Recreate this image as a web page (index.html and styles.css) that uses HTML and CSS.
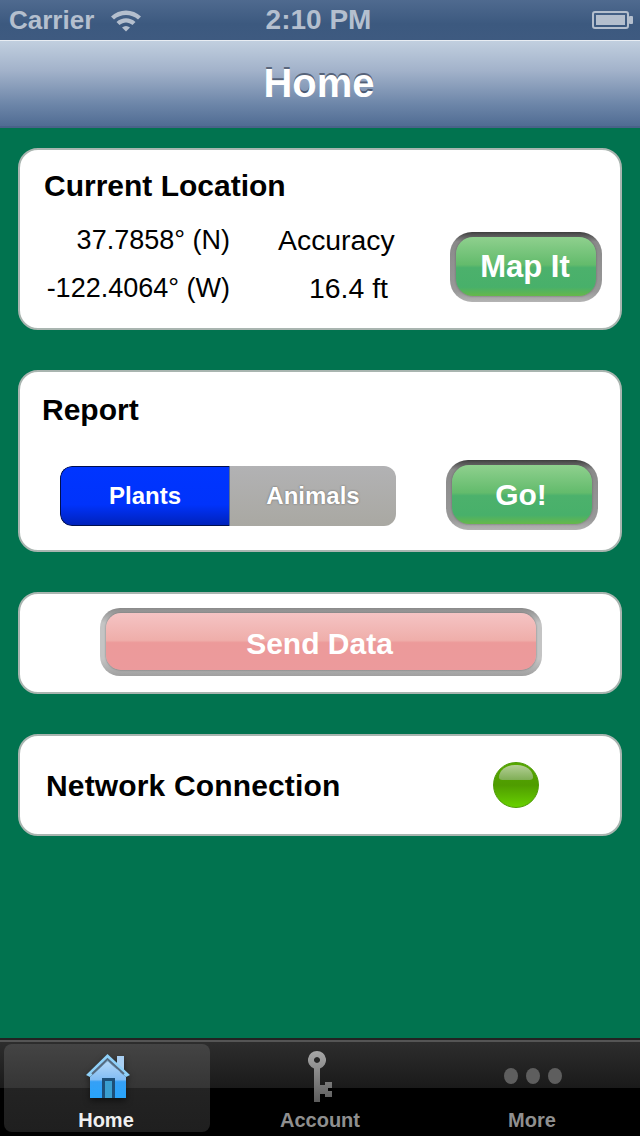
FILE: index.html
```html
<!DOCTYPE html>
<html lang="en">
<head>
  <meta charset="UTF-8" />
  <meta name="viewport" content="width=device-width, initial-scale=1.0" />
  <title>Home</title>
  <link rel="stylesheet" href="styles.css">
</head>
<body>

  <header>
    <div class="status-bar">
      <span class="carrier">Carrier</span>
      <svg class="wifi" width="32" height="24" viewBox="0 0 32 24">
        <path d="M1 8.500C9 0.500 23 0.500 31 8.500L28 11.500C21.500 5.500 10.500 5.500 4 11.500Z" fill="#b4bfce"/>
        <path d="M6.500 14C12 9 20 9 25.500 14L22.500 17C18.500 13.500 13.500 13.500 9.500 17Z" fill="#b4bfce"/>
        <path d="M12 19.500C14.500 17.500 17.500 17.500 20 19.500L16 23.500Z" fill="#b4bfce"/>
      </svg>
      <span class="clock">2:10 PM</span>
      <svg class="battery" width="41" height="18" viewBox="0 0 41 18">
        <rect x="1" y="1" width="35" height="16" rx="2" fill="none" stroke="#b4bfce" stroke-width="2"/>
        <rect x="4" y="4" width="29" height="10" fill="#b4bfce"/>
        <rect x="37" y="5" width="4" height="8" rx="1" fill="#b4bfce"/>
      </svg>
    </div>
    <div class="navbar"><h1>Home</h1></div>
  </header>

  <main>
    <section class="card card-location">
      <h2>Current Location</h2>
      <div class="location-row">
        <div class="coords">
          <div>37.7858° (N)</div>
          <div>-122.4064° (W)</div>
        </div>
        <div class="accuracy">
          <div>Accuracy</div>
          <div class="accuracy-value">16.4 ft</div>
        </div>
        <a class="btn btn-green btn-map"><span class="face">Map It</span></a>
      </div>
    </section>

    <section class="card card-report">
      <h2>Report</h2>
      <div class="report-row">
        <div class="segmented">
          <span class="seg seg-on">Plants</span>
          <span class="seg seg-off">Animals</span>
        </div>
        <a class="btn btn-green btn-go"><span class="face">Go!</span></a>
      </div>
    </section>

    <section class="card card-send">
      <a class="btn btn-red"><span class="face">Send Data</span></a>
    </section>

    <section class="card card-network">
      <h2>Network Connection</h2>
      <span class="led"></span>
    </section>
  </main>

  <nav class="tabbar">
    <a class="tab tab-active">
      <svg width="44" height="44" viewBox="0 0 44 44">
        <defs>
          <linearGradient id="house" x1="0" y1="0" x2="0" y2="1">
            <stop offset="0" stop-color="#b5d8f8"/>
            <stop offset="0.5" stop-color="#82bdf4"/>
            <stop offset="0.56" stop-color="#35a0f6"/>
            <stop offset="1" stop-color="#28a4fa"/>
          </linearGradient>
        </defs>
        <rect x="31" y="2" width="7" height="16" fill="#a9cff2"/>
        <path d="M21.500 7L40 23V44H4V23Z" fill="url(#house)"/>
        <path d="M0 21L21.500 0L44 21L40 23L21.500 7L4 23Z" fill="#8fd0f8"/>
        <path d="M6 20L21.500 5L38 20" fill="none" stroke="#56697f" stroke-width="2"/>
        <rect x="16" y="24" width="13" height="20" fill="#1d4f78"/>
        <rect x="19" y="27" width="7" height="17" fill="#3a9fd0"/>
      </svg>
      <span>Home</span>
    </a>
    <a class="tab tab-account">
      <svg width="26" height="52" viewBox="0 0 26 52">
        <defs>
          <linearGradient id="key" x1="0" y1="0" x2="0" y2="1">
            <stop offset="0" stop-color="#a8a8a8"/>
            <stop offset="1" stop-color="#5c5c5c"/>
          </linearGradient>
        </defs>
        <path fill-rule="evenodd" fill="url(#key)" d="M9 0a9 9 0 0 1 3 17.500V34H17V31H24V37H20V40H24V46H17V43H12V51H6V17.500A9 9 0 0 1 9 0ZM9 6a3 3 0 1 0 0.010 0Z"/>
      </svg>
      <span>Account</span>
    </a>
    <a class="tab tab-more">
      <span class="dots"><i></i><i></i><i></i></span>
      <span>More</span>
    </a>
  </nav>

</body>
</html>
```

FILE: styles.css
```css
body {
  margin: 0;
  width: 640px;
  height: 1136px;
  display: flex;
  flex-direction: column;
  overflow: hidden;
  font-family: "Liberation Sans", Arial, sans-serif;
  background: #01734f;
  color: #000;
}

/* status + nav */
.status-bar {
  height: 40px;
  box-sizing: border-box;
  padding: 0 7px 0 9px;
  display: flex;
  align-items: center;
  position: relative;
  background: linear-gradient(#4f6a8f, #3c597f 60%, #3e5a80);
  color: #b4bfce;
  font-size: 26px;
  font-weight: bold;
}

.wifi {
  margin-left: 16px;
}

.clock {
  position: absolute;
  left: 0;
  right: 0;
  text-align: center;
  font-size: 28px;
  padding-right: 3px;
}

.battery {
  margin-left: auto;
}

.navbar {
  height: 88px;
  box-sizing: border-box;
  border-top: 1px solid #e8edf3;
  border-bottom: 2px solid #496289;
  background: linear-gradient(#c1cfdf, #a2b2ca 35%, #6c85a8 75%, #506c93);
  display: flex;
  align-items: center;
  justify-content: center;
}

h1 {
  margin: 0 2px 0 0;
  font-size: 40px;
  font-weight: bold;
  color: #fff;
  text-shadow: 0 -2px 0 rgba(40, 50, 70, 0.6);
}

/* cards */
main {
  flex: 1;
  padding: 20px 18px 0;
  display: flex;
  flex-direction: column;
  gap: 40px;
}

.card {
  box-sizing: border-box;
  background: #fff;
  border: 2px solid #a9b5b0;
  border-radius: 20px;
}

h2 {
  margin: 0;
  font-size: 30px;
  font-weight: bold;
  line-height: 34px;
}

.card-location {
  height: 182px;
  padding: 19px 18px 0 24px;
}

.location-row {
  display: flex;
  align-items: flex-start;
  font-size: 27px;
  line-height: 48px;
  margin-top: 13px;
}

.coords {
  width: 186px;
  text-align: right;
  white-space: nowrap;
}

.accuracy {
  margin-left: 48px;
  width: 117px;
  white-space: nowrap;
  font-size: 28.400px;
}

.accuracy-value {
  padding-left: 31px;
}

/* grey bezel with the coloured face inside */
.btn {
  box-sizing: border-box;
  display: block;
  padding: 5px 6px 6px;
  color: #fff;
  font-weight: bold;
  font-size: 31px;
}

.face {
  display: flex;
  align-items: center;
  justify-content: center;
  box-sizing: border-box;
  height: 100%;
  box-shadow: 0 0 2px rgba(70, 70, 70, 0.7);
}

.btn-green {
  width: 152px;
  height: 70px;
  border-radius: 22px;
  background: linear-gradient(#3e3e3e, #8a8a8a 14%, #999 85%, #b4b4b4);
}

.btn-green .face {
  border-radius: 17px;
  background: linear-gradient(#8fd08e, #63bb6c 47%, #4cb16c 52%, #48b06a 85%, #66b84a);
}

.btn-map {
  margin-left: 55px;
  margin-top: 16px;
}

.btn-map .face {
  padding-right: 2px;
}

.card-report {
  height: 182px;
  padding: 21px 22px 0 22px;
}

.report-row {
  display: flex;
  align-items: center;
  margin-top: 35px;
  padding-left: 18px;
}

.segmented {
  width: 336px;
  height: 60px;
  display: flex;
  border-radius: 12px;
  overflow: hidden;
  font-size: 24px;
  font-weight: bold;
  color: #fff;
}

.seg {
  display: flex;
  align-items: center;
  justify-content: center;
}

.seg-on {
  width: 169px;
  box-sizing: border-box;
  border: 1px solid #00104f;
  border-right: 0;
  border-radius: 12px 0 0 12px;
  background: linear-gradient(#0035ff, #0033fb 65%, #0022bb);
}

.seg-off {
  flex: 1;
  border-left: 1px solid #5c6f94;
  background: linear-gradient(#b2b2b4, #a9a8a2);
  text-shadow: 0 0 2px rgba(60, 60, 60, 0.7);
}

.btn-go {
  margin-left: 50px;
  margin-top: -2px;
  font-size: 30px;
}

.btn-go .face {
  padding-right: 2px;
}

.card-send {
  height: 102px;
  padding: 14px 0 0 80px;
}

.btn-red {
  width: 442px;
  height: 68px;
  border-radius: 20px;
  font-size: 30px;
  background: linear-gradient(#8a8a8a, #c4c4c4 22%, #c4c4c4 75%, #a0a0a0);
}

.btn-red .face {
  border-radius: 15px;
  padding: 4px 3px 0 0;
  background: linear-gradient(#f5c4c4, #efaeaa 48%, #ec9a9a 52%, #ec9a9c);
}

.card-network {
  height: 102px;
  padding: 0 81px 0 26px;
  display: flex;
  align-items: center;
  justify-content: space-between;
}

.card-network h2 {
  letter-spacing: 0.15px;
  padding-top: 1px;
}

.led {
  box-sizing: border-box;
  width: 46px;
  height: 46px;
  border-radius: 50%;
  position: relative;
  border: 1px solid #4d9a05;
  background: linear-gradient(#57a800, #4f9c00 50%, #68d100);
}

/* gloss over the led */
.led::after {
  content: "";
  position: absolute;
  left: 5px;
  top: 2px;
  width: 34px;
  height: 15px;
  border-radius: 18px 18px 4px 4px / 14px 14px 3px 3px;
  background: linear-gradient(#b4cf96, #7fae55);
}

/* tab bar */
.tabbar {
  height: 98px;
  box-sizing: border-box;
  padding: 4px 4px 4px;
  border-top: 2px solid #222;
  box-shadow: inset 0 2px 0 #555;
  background: linear-gradient(#2e2e2e, #1a1a1a 50%, #000 50%, #000);
  display: grid;
  grid-template-columns: repeat(3, 206px);
  column-gap: 7px;
}

.tab {
  display: flex;
  flex-direction: column;
  align-items: center;
  justify-content: flex-end;
  color: #8f8f8f;
  font-size: 20px;
  font-weight: bold;
  line-height: 24px;
  border-radius: 8px;
  position: relative;
}

.tab-active {
  color: #f0f0f0;
  background: linear-gradient(#444, #353535 50%, #232323 50%, #1f1f1f);
}

.tab-active span {
  padding-right: 2px;
}

.tab-more > span:last-child {
  padding-right: 2px;
}

.tab svg {
  position: absolute;
}

.tab-active svg {
  top: 10px;
  left: 82px;
  filter: drop-shadow(0 3px 3px rgba(0, 0, 0, 0.5));
}

.tab-account svg {
  left: 91px;
  top: 7px;
}

.dots {
  position: absolute;
  top: 24px;
  display: flex;
  gap: 8px;
}

.dots i {
  width: 14px;
  height: 16px;
  border-radius: 50%;
  background: #5e5e5e;
}
```
